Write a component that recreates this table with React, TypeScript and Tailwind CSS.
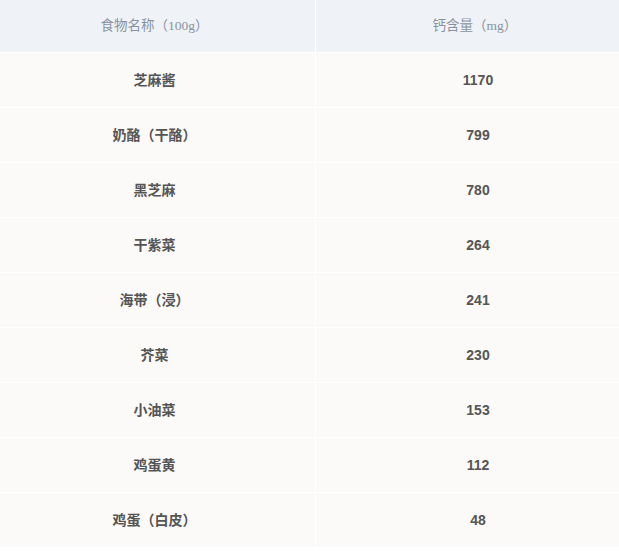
const rows: [string, string][] = [
  ['芝麻酱', '1170'],
  ['奶酪（干酪）', '799'],
  ['黑芝麻', '780'],
  ['干紫菜', '264'],
  ['海带（浸）', '241'],
  ['芥菜', '230'],
  ['小油菜', '153'],
  ['鸡蛋黄', '112'],
  ['鸡蛋（白皮）', '48'],
]

export default function App() {
  return (
    <div className="w-[619px] overflow-hidden bg-white">
      <div
        className="grid w-[640px] grid-cols-[315px_324px] gap-px bg-white"
        style={{ fontFamily: '"Liberation Sans", Arial, "Noto Sans CJK SC", sans-serif' }}
      >
        <div className="flex h-[52px] items-center justify-center pr-[6px] bg-[#eff3f7] text-[13.5px] text-[#87929f]" style={{ fontFamily: '"Liberation Serif", "Noto Sans CJK SC", serif' }}>
          食物名称（100g）
        </div>
        <div className="flex h-[52px] items-center justify-center pr-[6px] bg-[#eff3f7] text-[13.5px] text-[#87929f]" style={{ fontFamily: '"Liberation Serif", "Noto Sans CJK SC", serif' }}>
          钙含量（mg）
        </div>
        {rows.map(([name, val]) => (
          <>
            <div key={name} className="flex h-[54px] items-center justify-center pr-[6px] bg-[#fbfaf8] text-[14px] font-bold text-[#555555]">
              {name}
            </div>
            <div key={name + 'v'} className="flex h-[54px] items-center justify-center bg-[#fbfaf8] text-[14px] font-bold text-[#555555]">
              {val}
            </div>
          </>
        ))}
      </div>
    </div>
  )
}
